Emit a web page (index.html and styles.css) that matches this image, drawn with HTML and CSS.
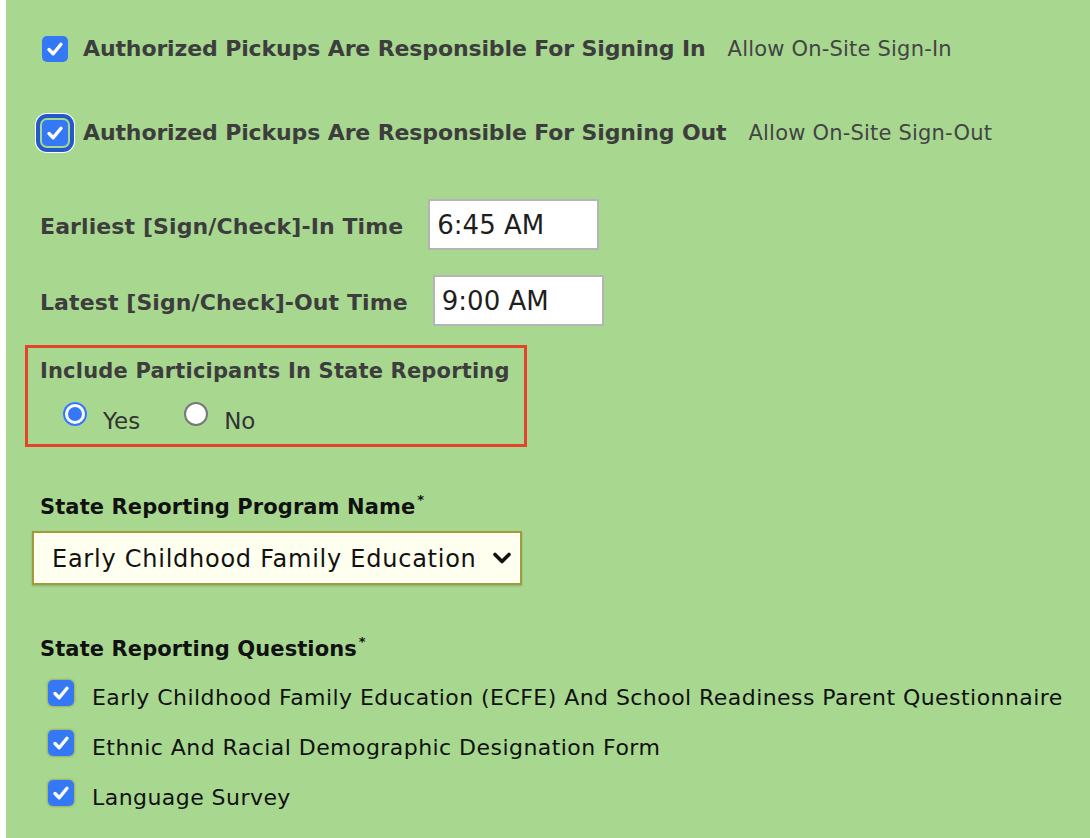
FILE: index.html
```html
<!DOCTYPE html>
<html>
<head>
<meta charset="utf-8">
<link rel="stylesheet" href="styles.css">
</head>
<body>
<div class="page">
  <div class="check-row">
    <span class="cb"><svg width="26" height="26" viewBox="0 0 26 26"><rect width="26" height="26" rx="5" fill="#3478f6"/><path d="M7 13.5 L11.2 17.8 L19 8.2" fill="none" stroke="#fff" stroke-width="3.4" stroke-linecap="round" stroke-linejoin="round"/></svg></span>
    <span class="big-label">Authorized Pickups Are Responsible For Signing In</span>
    <span class="hint">Allow On-Site Sign-In</span>
  </div>
  <div class="check-row second">
    <span class="cb focus"><svg width="26" height="26" viewBox="0 0 26 26"><rect width="26" height="26" rx="5" fill="#3478f6"/><path d="M7 13.5 L11.2 17.8 L19 8.2" fill="none" stroke="#fff" stroke-width="3.4" stroke-linecap="round" stroke-linejoin="round"/></svg></span>
    <span class="big-label">Authorized Pickups Are Responsible For Signing Out</span>
    <span class="hint">Allow On-Site Sign-Out</span>
  </div>
  <div class="field-row first">
    <span class="label">Earliest [Sign/Check]-In Time</span>
    <span class="time-input">6:45 AM</span>
  </div>
  <div class="field-row">
    <span class="label">Latest [Sign/Check]-Out Time</span>
    <span class="time-input">9:00 AM</span>
  </div>
  <div class="red-box">
    <div class="box-title">Include Participants In State Reporting</div>
    <div class="radio-row">
      <span class="radio on"></span><span class="radio-text">Yes</span>
      <span class="radio off"></span><span class="radio-text">No</span>
    </div>
  </div>
  <div class="dark-label program">State Reporting Program Name<sup>*</sup></div>
  <div class="select">
    <span>Early Childhood Family Education</span>
    <svg width="20" height="14" viewBox="0 0 20 14"><path d="M3 3.5 L10 10.5 L17 3.5" fill="none" stroke="#111" stroke-width="3.6" stroke-linecap="round" stroke-linejoin="round"/></svg>
  </div>
  <div class="dark-label questions">State Reporting Questions<sup>*</sup></div>
  <div class="item">
    <span class="cb glow"><svg width="26" height="26" viewBox="0 0 26 26"><rect width="26" height="26" rx="5" fill="#3478f6"/><path d="M7 13.5 L11.2 17.8 L19 8.2" fill="none" stroke="#fff" stroke-width="3.4" stroke-linecap="round" stroke-linejoin="round"/></svg></span>
    <span class="item-text">Early Childhood Family Education (ECFE) And School Readiness Parent Questionnaire</span>
  </div>
  <div class="item">
    <span class="cb glow"><svg width="26" height="26" viewBox="0 0 26 26"><rect width="26" height="26" rx="5" fill="#3478f6"/><path d="M7 13.5 L11.2 17.8 L19 8.2" fill="none" stroke="#fff" stroke-width="3.4" stroke-linecap="round" stroke-linejoin="round"/></svg></span>
    <span class="item-text">Ethnic And Racial Demographic Designation Form</span>
  </div>
  <div class="item">
    <span class="cb glow"><svg width="26" height="26" viewBox="0 0 26 26"><rect width="26" height="26" rx="5" fill="#3478f6"/><path d="M7 13.5 L11.2 17.8 L19 8.2" fill="none" stroke="#fff" stroke-width="3.4" stroke-linecap="round" stroke-linejoin="round"/></svg></span>
    <span class="item-text">Language Survey</span>
  </div>
</div>
</body>
</html>
```
FILE: styles.css
```css
html, body {
  margin: 0;
  padding: 0;
  background: #ffffff;
}
.page {
  margin-left: 6px;
  background: #a8d890;
  min-height: 838px;
  box-sizing: border-box;
  padding: 36px 0 0 34px;
  font-family: "DejaVu Sans", "Noto Sans", sans-serif;
  color: #3d3d3d;
  overflow: hidden;
}
.check-row {
  display: flex;
  align-items: center;
  height: 26px;
  margin-left: 2px;
  white-space: nowrap;
}
.check-row.second {
  margin-top: 58px;
}
.cb {
  display: block;
  width: 26px;
  height: 26px;
  border-radius: 5px;
  flex: none;
}
.cb svg {
  display: block;
}
.cb.focus {
  box-shadow: 0 0 0 2px #a8d890, 0 0 0 6px #2459c9, 0 0 0 7px #ffffff;
}
.cb.glow {
  box-shadow: 0 0 2px 1px rgba(150, 140, 40, 0.55);
}
.big-label {
  font-weight: bold;
  font-size: 22px;
  margin-left: 15px;
  line-height: 30px;
  letter-spacing: -0.12px;
}
.hint {
  font-size: 21px;
  margin-left: 22px;
  color: #444;
  line-height: 30px;
  letter-spacing: 0.2px;
}
.field-row {
  display: flex;
  align-items: center;
  height: 51px;
  gap: 25px;
  margin-top: 25px;
}
.field-row.first {
  margin-top: 53px;
}
.label {
  font-weight: bold;
  font-size: 22px;
  line-height: 30px;
  padding-top: 5px;
  letter-spacing: 0.1px;
}
.time-input {
  box-sizing: border-box;
  width: 171px;
  height: 51px;
  border: 2px solid #b4b4b4;
  background: #fff;
  font-size: 26px;
  color: #1e1e1e;
  padding-left: 7px;
  line-height: 49px;
}
.red-box {
  box-sizing: border-box;
  margin-top: 19px;
  margin-left: -15px;
  width: 502px;
  height: 102px;
  border: 3px solid #e5432b;
  padding: 8px 0 0 12px;
}
.box-title {
  font-weight: bold;
  font-size: 21px;
  line-height: 30px;
  letter-spacing: 0.18px;
}
.radio-row {
  display: flex;
  align-items: flex-start;
  margin-top: 16px;
  margin-left: 23px;
}
.radio {
  display: block;
  width: 24px;
  height: 24px;
  border-radius: 50%;
  box-sizing: border-box;
  flex: none;
}
.radio.on {
  background: #3478f6;
  box-shadow: inset 0 0 0 2px #3478f6, inset 0 0 0 5px #ffffff;
}
.radio.off {
  background: #fff;
  border: 2px solid #777;
  margin-left: 44px;
}
.radio-text {
  font-size: 23px;
  line-height: 24px;
  margin-left: 16px;
  padding-top: 7px;
  color: #333;
}
.dark-label {
  font-weight: bold;
  font-size: 21px;
  line-height: 30px;
  color: #111;
  letter-spacing: 0.1px;
}
.dark-label sup {
  font-size: 13px;
  vertical-align: top;
  line-height: 14px;
  position: relative;
  top: 1px;
  margin-left: 2px;
}
.dark-label.program {
  margin-top: 45px;
}
.select {
  box-sizing: border-box;
  margin-top: 9px;
  margin-left: -8px;
  width: 490px;
  height: 54px;
  background: #fffff0;
  border: 2px solid #a39a3e;
  box-shadow: 0 1px 2px rgba(0, 0, 0, 0.2);
  display: flex;
  align-items: center;
  justify-content: space-between;
  padding: 0 8px 0 18px;
  font-size: 24px;
  letter-spacing: 0.75px;
  color: #111;
}
.select span {
  padding-top: 2px;
}
.dark-label.questions {
  margin-top: 49px;
}
.item {
  display: flex;
  align-items: flex-start;
  height: 26px;
  margin-left: 8px;
  margin-top: 24px;
}
.dark-label.questions + .item {
  margin-top: 16px;
}
.item-text {
  font-size: 22px;
  line-height: 24px;
  margin-left: 18px;
  padding-top: 6px;
  color: #111;
  white-space: nowrap;
  letter-spacing: 0.45px;
}
```
